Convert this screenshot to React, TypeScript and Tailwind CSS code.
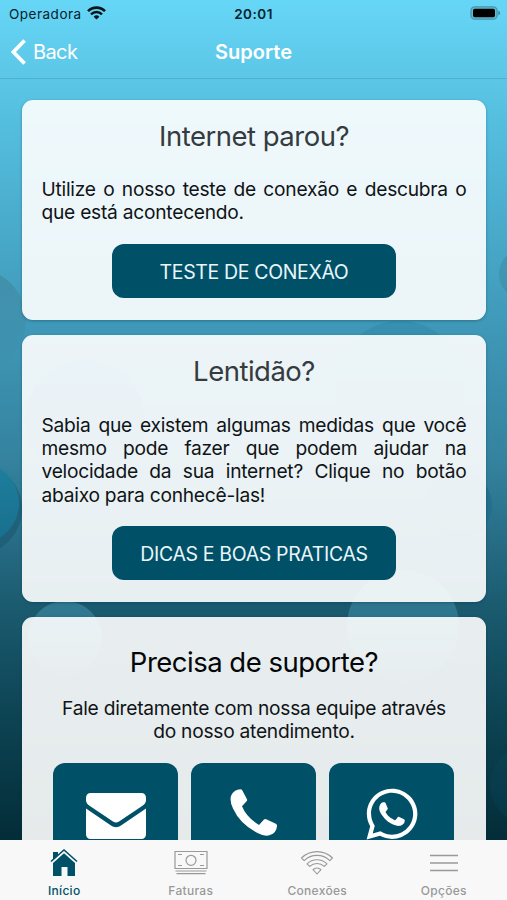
import React from "react";
import { FaWhatsapp } from "react-icons/fa";

function Backdrop() {
  return (
    <svg className="absolute inset-0" width="507" height="900" viewBox="0 0 507 900" aria-hidden="true">
      <defs>
        <linearGradient id="sky" x1="0" y1="0" x2="0" y2="840" gradientUnits="userSpaceOnUse">
          <stop offset="0" stopColor="#66d6f7" />
          <stop offset="0.1" stopColor="#5bc5e5" />
          <stop offset="0.14" stopColor="#55bfe0" />
          <stop offset="0.39" stopColor="#3f98b7" />
          <stop offset="0.55" stopColor="#34829e" />
          <stop offset="0.72" stopColor="#1b5b70" />
          <stop offset="0.85" stopColor="#0d4454" />
          <stop offset="1" stopColor="#032d38" />
        </linearGradient>
        <linearGradient id="bubble" x1="0" y1="0" x2="0" y2="1">
          <stop offset="0" stopColor="#1f7f9e" />
          <stop offset="1" stopColor="#176f8d" />
        </linearGradient>
        <linearGradient id="haze" x1="0" y1="0" x2="0" y2="1">
          <stop offset="0" stopColor="#3f8298" stopOpacity="0.6" />
          <stop offset="1" stopColor="#3f8298" stopOpacity="0" />
        </linearGradient>
        <linearGradient id="glow" x1="0" y1="0" x2="0" y2="1">
          <stop offset="0" stopColor="#36829b" stopOpacity="0.8" />
          <stop offset="0.4" stopColor="#36829b" stopOpacity="0.7" />
          <stop offset="1" stopColor="#36829b" stopOpacity="0.1" />
        </linearGradient>
      </defs>
      <rect width="507" height="900" fill="url(#sky)" />
      <circle cx="-26" cy="320" r="52" fill="url(#haze)" />
      <circle cx="525" cy="274" r="26" fill="#3a7f99" opacity="0.35" />
      <circle cx="400" cy="385" r="64" fill="#2f88a8" opacity="0.5" />
      <circle cx="85" cy="420" r="60" fill="#1c6fac" opacity="0.4" />
      <circle cx="-24" cy="509" r="46" fill="#1d5b73" opacity="0.7" />
      <circle cx="-22" cy="503" r="41" fill="url(#bubble)" />
      <circle cx="458" cy="505" r="34" fill="#1a6d8b" opacity="0.6" />
      <circle cx="65" cy="638" r="37" fill="url(#glow)" />
      <circle cx="403" cy="626" r="56" fill="url(#glow)" />
      <circle cx="530" cy="785" r="40" fill="#0b4a62" opacity="0.25" />
    </svg>
  );
}

function StatusBar() {
  return (
    <div className="grid h-7 grid-cols-3 items-center text-[13.5px] text-[#07222c]">
      <div className="flex items-center gap-[5px] pl-[9px]">
        <span className="tracking-[0.5px]">Operadora</span>
        <svg className="-mt-0.5" width="19" height="14" viewBox="0 0 19 14" fill="none" stroke="#04141b">
          <path d="M1 5.2a12 12 0 0 1 17 0" strokeWidth="2.6" />
          <path d="M4 8.3a7.8 7.8 0 0 1 11 0" strokeWidth="2.4" />
          <path d="M9.5 13.6 6.6 10.7a4.1 4.1 0 0 1 5.8 0z" fill="#04141b" stroke="none" />
        </svg>
      </div>
      <span className="text-center font-semibold tracking-[0.5px]">20:01</span>
      <div className="flex justify-end pr-[6px] pb-0.5">
        <svg width="31" height="14" viewBox="0 0 31 14">
          <rect x="1" y="0.8" width="26" height="12.4" rx="3.6" fill="#5fb9d2" stroke="#4797ad" strokeWidth="1.3" />
          <rect x="3" y="2.7" width="22" height="8.6" rx="1.7" fill="#000" />
          <path d="M28.3 4.7c2.2.7 2.2 3.9 0 4.6z" fill="#3d8296" />
        </svg>
      </div>
    </div>
  );
}

function Header() {
  return (
    <div className="grid h-[51px] grid-cols-3 items-center border-b border-[#4fb0cf] pb-[3px] text-[20px] text-white">
      <div className="flex items-center gap-[7px] pl-[11px]">
        <svg width="15" height="26" viewBox="0 0 15 26" fill="none" stroke="#fff" strokeWidth="3.8">
          <path d="M13.6 1.5 2.4 13l11.2 11.5" />
        </svg>
        <span className="tracking-[-0.6px]">Back</span>
      </div>
      <span className="text-center font-semibold">Suporte</span>
    </div>
  );
}

function Card({ className, children }: { className: string; children: React.ReactNode }) {
  return (
    <section className={`shrink-0 rounded-[11px] bg-white/90 px-[19.5px] shadow-[0_1px_3px_rgba(0,40,60,0.35)] ${className}`}>
      {children}
    </section>
  );
}

function Title({ className, children }: { className: string; children: React.ReactNode }) {
  return <h2 className={`whitespace-nowrap text-center text-[27.5px] leading-8 tracking-[-0.5px] ${className}`}>{children}</h2>;
}

function Line({ className = "", children }: { className?: string; children: React.ReactNode }) {
  return (
    <span className={`block whitespace-nowrap text-[19.2px] leading-[23.2px] tracking-[-0.25px] text-[#101416] ${className}`}>
      {children}
    </span>
  );
}

const justified = "[text-align-last:justify]";

function Action({ children }: { children: React.ReactNode }) {
  return (
    <button className="mx-auto flex h-[54px] w-[284px] items-center justify-center rounded-[12px] bg-[#005168] pt-0.5 text-[19.5px] text-[#e9f6fa]">
      <span className="whitespace-nowrap tracking-[-0.35px]">{children}</span>
    </button>
  );
}

function Contact({ children }: { children: React.ReactNode }) {
  return (
    <button className="flex h-[106px] w-[125px] justify-center rounded-[12px] bg-[#005168] text-white">
      {children}
    </button>
  );
}

function Tab({ label, active, children }: { label: string; active?: boolean; children: React.ReactNode }) {
  return (
    <div className={`flex flex-1 flex-col items-center pt-[7px] ${active ? "text-[#005168]" : "text-[#999]"}`}>
      <div className="flex h-8 items-center">{children}</div>
      <span className="mt-[4px] text-[12px] leading-4 font-medium tracking-[0.3px]">{label}</span>
    </div>
  );
}

export default function App() {
  return (
    <main className="relative flex h-[900px] w-[507px] flex-col overflow-hidden font-['Inter','Liberation_Sans',sans-serif]">
      <Backdrop />
      <div className="relative flex min-h-0 flex-1 flex-col">
        <StatusBar />
        <Header />
        <div className="flex min-h-0 flex-1 flex-col gap-[15px] overflow-hidden pr-[21px] pl-[22px] pt-[21px]">
          <Card className="h-[220px] pt-5">
            <Title className="text-[#353b3e]">Internet parou?</Title>
            <div className="pt-[26px] pb-5">
              <Line className={justified}>Utilize o nosso teste de conexão e descubra o</Line>
              <Line>que está acontecendo.</Line>
            </div>
            <Action>TESTE DE CONEXÃO</Action>
          </Card>
          <Card className="h-[267px] pt-5">
            <Title className="text-[#353b3e]">Lentidão?</Title>
            <div className="pt-[27px] pb-[19.5px]">
              <Line className={justified}>Sabia que existem algumas medidas que você</Line>
              <Line className={justified}>mesmo pode fazer que podem ajudar na</Line>
              <Line className={justified}>velocidade da sua internet? Clique no botão</Line>
              <Line>abaixo para conhecê-las!</Line>
            </div>
            <Action>DICAS E BOAS PRATICAS</Action>
          </Card>
          <Card className="h-[300px] pt-[29px]">
            <Title className="text-[#050607]">Precisa de suporte?</Title>
            <div className="pt-[19px] pb-[20px] text-center">
              <Line>Fale diretamente com nossa equipe através</Line>
              <Line>do nosso atendimento.</Line>
            </div>
            <div className="flex justify-center gap-[13px] pr-px">
              <Contact>
                <svg className="mt-[30px]" width="60" height="46" viewBox="0 0 60 46" fill="currentColor">
                  <path d="M4.5 0h51C58 0 60 2 60 4.5V7c0 2.6-1.3 4.3-3.5 5.8L33 28.6c-2 1.3-4 1.3-6 0L3.5 12.8C1.3 11.3 0 9.6 0 7V4.5C0 2 2 0 4.5 0z" />
                  <path d="M0 15.5 25 32.5c3.3 2.2 6.7 2.2 10 0L60 15.5V41.5c0 2.500-2 4.500-4.500 4.500h-51C2 46 0 44 0 41.5z" />
                </svg>
              </Contact>
              <Contact>
                <svg className="mt-[26px]" width="48" height="48" viewBox="0 0 48 48" fill="currentColor">
                  <path d="M7.5.8 10.5.3Q11.6.3 12.2 1.3L17 10.3Q17.4 11.3 16.8 12L12 17.3Q16.5 28.5 29 36L34 30.6Q35 29.8 36.2 30.2L45.8 34.8Q47.2 35.6 47 37 46.5 44 40 46 35 48 27.5 44 10 35 3 19.5-.5 12 1 7 2.5 2.5 7.5.8z" />
                </svg>
              </Contact>
              <Contact><FaWhatsapp className="mt-[22px]" size={58} /></Contact>
            </div>
          </Card>
        </div>
      </div>
      <nav className="relative flex h-[60px] bg-[#f8f8f8] pl-px">
        <Tab label="Início" active>
          <svg width="28" height="28" viewBox="0 0 28 28" fill="currentColor">
            <path d="M3 3h5v3.2L3 11z" />
            <path d="M14 4.2 25 14v13h-7.5v-9h-6v9H3V14z" />
            <path d="M1 12.5 14 1l13 11.5" fill="none" stroke="currentColor" strokeWidth="1.6" />
            <path d="M1.8 14 14 3.2 26.2 14" fill="none" stroke="#f8f8f8" strokeWidth="1" />
          </svg>
        </Tab>
        <Tab label="Faturas">
          <svg width="34" height="26" viewBox="0 0 34 26" fill="none" stroke="currentColor" strokeWidth="1.2">
            <path d="M1 1.5h32v17H1zM1.5 21h31M2.5 23.7h29" />
            <circle cx="17" cy="10.3" r="5" />
            <path d="M4 4.5h4M26 4.5h4M4 15.5h4M26 15.5h4" />
          </svg>
        </Tab>
        <Tab label="Conexões">
          <svg width="34" height="26" viewBox="0 0 34 26" fill="none" stroke="currentColor" strokeWidth="1.1" strokeLinejoin="round">
            <path d="M1.5 8a22 22 0 0 1 31 0l-2.7 2.6a18.3 18.3 0 0 0-25.6 0z" />
            <path d="M7 13.8a14.2 14.2 0 0 1 20 0l-2.7 2.6a10.5 10.5 0 0 0-14.6 0z" />
            <path d="M17 24l-4-4.3a5.6 5.6 0 0 1 8 0z" />
          </svg>
        </Tab>
        <Tab label="Opções">
          <svg width="28" height="20" viewBox="0 0 28 20" fill="none" stroke="currentColor" strokeWidth="1.4">
            <path d="M0 2.5h28M0 10h28M0 17.5h28" />
          </svg>
        </Tab>
      </nav>
    </main>
  );
}
